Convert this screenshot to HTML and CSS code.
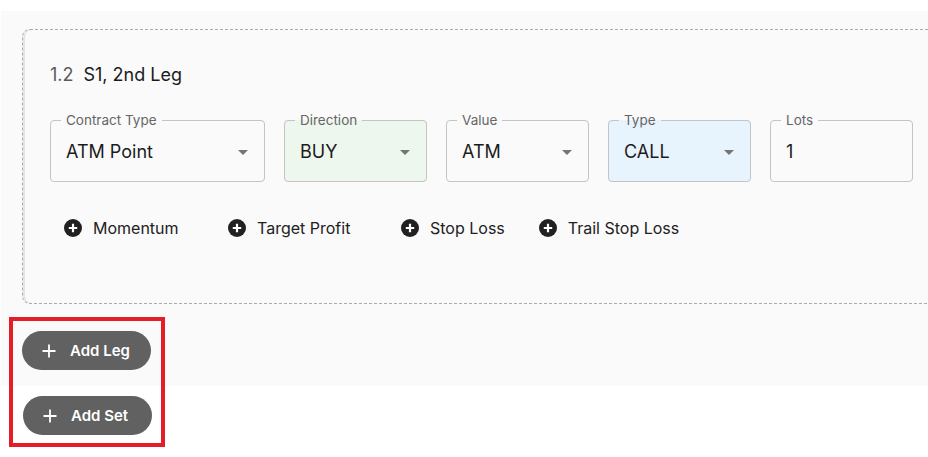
FILE: index.html
```html
<!DOCTYPE html>
<html>
<head>
<meta charset="utf-8">
<link rel="stylesheet" href="styles.css">
</head>
<body>
<div class="page">
  <div class="panel">
    <div class="card">
      <div class="title"><span class="num">1.2</span><span class="name">S1, 2nd Leg</span></div>
      <div class="fields">
        <fieldset class="field wide">
          <legend>Contract Type</legend>
          <div class="inner"><span class="val">ATM Point</span><span class="arrow"></span></div>
        </fieldset>
        <fieldset class="field green">
          <legend>Direction</legend>
          <div class="inner"><span class="val">BUY</span><span class="arrow"></span></div>
        </fieldset>
        <fieldset class="field">
          <legend>Value</legend>
          <div class="inner"><span class="val">ATM</span><span class="arrow"></span></div>
        </fieldset>
        <fieldset class="field blue">
          <legend>Type</legend>
          <div class="inner"><span class="val">CALL</span><span class="arrow"></span></div>
        </fieldset>
        <fieldset class="field">
          <legend>Lots</legend>
          <div class="inner"><span class="val">1</span></div>
        </fieldset>
      </div>
      <div class="actions">
        <div class="action a-mom"><span class="pc"><svg viewBox="0 0 18 18" width="18" height="18"><circle cx="9" cy="9" r="9" fill="#212121"/><path d="M9 4.8v8.4M4.8 9h8.4" stroke="#fff" stroke-width="2.2"/></svg></span>Momentum</div>
        <div class="action a-tp"><span class="pc"><svg viewBox="0 0 18 18" width="18" height="18"><circle cx="9" cy="9" r="9" fill="#212121"/><path d="M9 4.8v8.4M4.8 9h8.4" stroke="#fff" stroke-width="2.2"/></svg></span>Target Profit</div>
        <div class="action"><span class="pc"><svg viewBox="0 0 18 18" width="18" height="18"><circle cx="9" cy="9" r="9" fill="#212121"/><path d="M9 4.8v8.4M4.8 9h8.4" stroke="#fff" stroke-width="2.2"/></svg></span>Stop Loss</div>
        <div class="action"><span class="pc"><svg viewBox="0 0 18 18" width="18" height="18"><circle cx="9" cy="9" r="9" fill="#212121"/><path d="M9 4.8v8.4M4.8 9h8.4" stroke="#fff" stroke-width="2.2"/></svg></span>Trail Stop Loss</div>
      </div>
    </div>
    <button class="pill"><svg viewBox="0 0 14 14" width="14" height="14"><path d="M7 0.5v13M0.5 7h13" stroke="#fff" stroke-width="1.8"/></svg>Add Leg</button>
  </div>
  <button class="pill set"><svg viewBox="0 0 14 14" width="14" height="14"><path d="M7 0.5v13M0.5 7h13" stroke="#fff" stroke-width="1.8"/></svg>Add Set</button>
  <div class="highlight"></div>
</div>
</body>
</html>
```
FILE: styles.css
```css
html, body {
  margin: 0;
  padding: 0;
  background: #fff;
  overflow: hidden;
}
body {
  font-family: Inter, "Liberation Sans", sans-serif;
  color: #212121;
}
.page {
  position: relative;
  width: 928px;
  height: 457px;
  padding-top: 11px;
  box-sizing: border-box;
}
.panel {
  margin-left: 1px;
  background: #fafafa;
  padding: 18px 0 16px 21px;
  overflow: hidden;
}
.card {
  width: 1000px;
  height: 275px;
  box-sizing: border-box;
  border: 1px dashed #ababab;
  border-radius: 8px;
  box-shadow: inset 2px 0 0 #e4e4e4;
  padding: 34px 0 0 27px;
}
.title {
  font-size: 18px;
  line-height: 22px;
  display: flex;
  gap: 10px;
}
.num { color: #5a5a5a; }
.name { color: #1a1a1a; }
.fields {
  display: flex;
  gap: 19px;
  margin-top: 26px;
}
.field {
  margin: 0;
  width: 143px;
  box-sizing: border-box;
  border: 1px solid #c4c4c4;
  border-radius: 4px;
  padding: 0 15px 7px 15px;
  min-width: 0;
}
.field.wide { width: 215px; }
.field.green { background: #edf7ed; }
.field.blue { background: #e8f4fd; }
.field legend {
  font-size: 13.5px;
  line-height: 16px;
  color: #666;
  padding: 0 5px;
  margin-left: -5px;
}
.inner {
  height: 46px;
  display: flex;
  align-items: center;
  justify-content: space-between;
}
.val {
  font-size: 18px;
  color: #1c1c1c;
}
.arrow {
  width: 0;
  height: 0;
  border-left: 5px solid transparent;
  border-right: 5px solid transparent;
  border-top: 5px solid #757575;
  margin-right: 1px;
  margin-top: 2px;
}
.actions {
  display: flex;
  gap: 34px;
  margin-top: 36px;
  padding-left: 14px;
}
.action {
  display: flex;
  align-items: center;
  gap: 11px;
  font-size: 16px;
  line-height: 20px;
  color: #212121;
}
.action.a-mom { width: 130px; }
.action.a-tp { width: 139px; }
.pc { display: flex; }
.pill {
  display: flex;
  align-items: center;
  gap: 14px;
  margin-top: 27px;
  height: 39px;
  padding: 0 20px 0 20px;
  width: 129px;
  box-sizing: border-box;
  border: none;
  border-radius: 20px;
  background: #616161;
  color: #fff;
  font-family: Inter, "Liberation Sans", sans-serif;
  font-size: 15px;
  font-weight: 600;
}
.set {
  margin: 10px 0 0 23px;
}
.highlight {
  position: absolute;
  left: 9px;
  top: 317px;
  width: 156px;
  height: 130px;
  box-sizing: border-box;
  border: 4px solid #e41e26;
}
```
